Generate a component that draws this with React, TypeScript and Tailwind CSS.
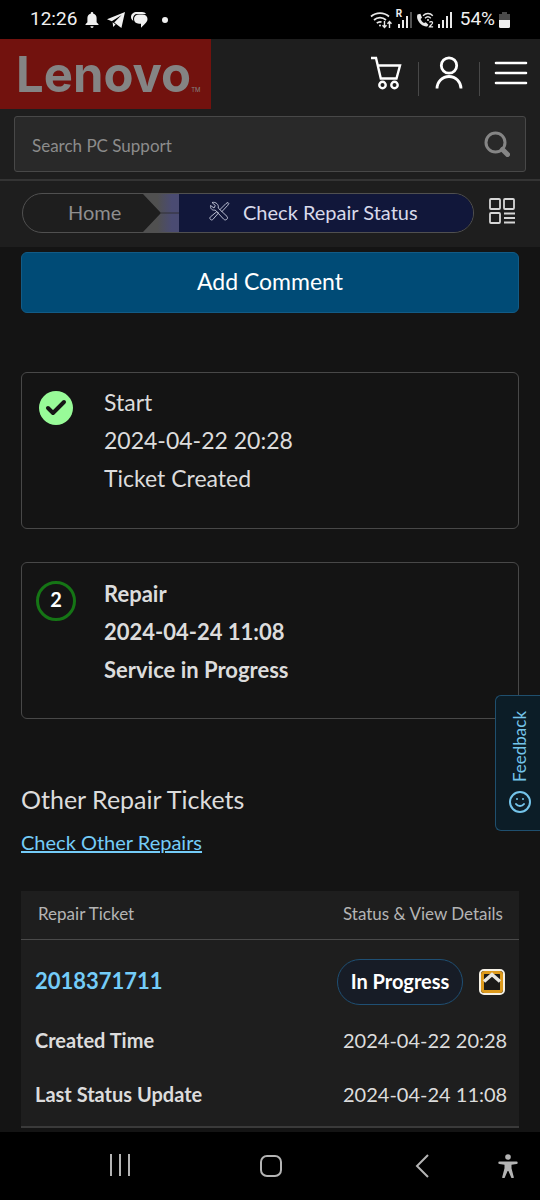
import { Check, Smile } from "lucide-react";

const steps = [
  { name: "Start", date: "2024-04-22 20:28", status: "Ticket Created", done: true },
  { name: "Repair", date: "2024-04-24 11:08", status: "Service in Progress", done: false },
];

const ticketDetails = [
  { label: "Created Time", value: "2024-04-22 20:28" },
  { label: "Last Status Update", value: "2024-04-24 11:08" },
];

const SignalBars = ({ weak = false }: { weak?: boolean }) => (
  <svg viewBox="0 0 14 16" className="h-4 w-3.5" fill="#e8e8e8" aria-hidden="true">
    <rect x="0" y="12" width="2" height="4" />
    <rect x="4" y="8" width="2" height="8" />
    <rect x="8" y="4" width="2" height="12" />
    <rect x="12" y="0" width="2" height="16" fillOpacity={weak ? 0.35 : 1} />
  </svg>
);

const StatusBar = () => (
  <div className="flex h-[39px] items-center justify-between bg-black pr-[30px] pl-[30px] font-['Roboto',sans-serif] text-[19px] text-[#f0f0f0]">
    <div className="flex items-center">
      <span>12:26</span>
      <svg viewBox="0 0 14 16" className="ml-2 h-4 w-3.5" fill="#f0f0f0" aria-hidden="true">
        <path d="M7 0a1.3 1.3 0 0 1 1.3 1.3v.4A4.5 4.5 0 0 1 11.6 6v4.2l1.9 2v.9H.5v-.9l1.9-2V6a4.5 4.500 0 0 1 3.300-4.300v-.4A1.300 1.300 0 0 1 7 0zM5.400 14.300h3.200a1.600 1.600 0 0 1-3.200 0z" />
      </svg>
      <svg viewBox="0 0 18 16" className="ml-2 h-4 w-[18px]" fill="#f0f0f0" aria-hidden="true">
        <path d="M18 0 0 7.300l4.800 1.900L14.600 3 7.200 10.600 14.400 16z" />
        <path d="m5.600 10.200.6 4.800 2.400-2.600z" />
      </svg>
      <svg viewBox="0 0 17 16" className="ml-1.5 h-4 w-[17px]" aria-hidden="true">
        <path d="M6 0h5c2 0 3.500.8 4 2H6C3.500 2 2 4 2 7c0 1 .2 1.500.5 2C1 8.200 0 6.800 0 5c0-3 2.500-5 6-5z" fill="#f0f0f0" />
        <path d="M8 2.500h3.500c3 0 5 1.900 5 4.600 0 2.200-1.300 3.600-3 5.200L10 15.700v-3.900H8c-3 0-5-1.900-5-4.700s2-4.600 5-4.600z" fill="#f0f0f0" />
      </svg>
      <span className="ml-3.5 size-1.5 rounded-full bg-[#f0f0f0]" />
    </div>
    <div className="flex items-center">
      <svg viewBox="0 0 22 18" className="h-[18px] w-[22px]" fill="none" stroke="#e8e8e8" strokeWidth="1.700" aria-hidden="true">
        <path d="M1 5.500a13.500 13.500 0 0 1 18 0M4 9a9 9 0 0 1 12 0M6.800 12.200a5 5 0 0 1 4.700-1.100" />
        <circle cx="10" cy="14.500" r="1" fill="#e8e8e8" stroke="none" />
        <path d="M14.500 10v6M12.500 14.300l2 2.200 2-2.200M19.500 17v-6M17.500 12.700l2-2.200 2 2.200" strokeWidth="1.400" />
      </svg>
      <span className="relative ml-1 flex h-4 w-4 justify-end">
        <span className="absolute -top-1 left-0 text-[10px] leading-3 font-bold">R</span>
        <SignalBars weak />
      </span>
      <svg viewBox="0 0 18 16" className="ml-1 h-4 w-[18px]" fill="none" stroke="#e8e8e8" aria-hidden="true">
        <path d="M1.500 2.500C.2 5.500 2 9.500 5 12.300c2 1.700 4.700 2.700 6.400 2l1-1.500-2.600-2.500-1.800.8C6.400 10.200 5 8.400 4.600 7l1.400-1.200L4.400 1.700z" fill="#e8e8e8" stroke="none" />
        <path d="M7 3.700c3-3 7-3 9.800 0M9 6.200c1.800-1.800 4-1.800 5.800 0" strokeWidth="1.400" />
        <path d="M13.500 10.500c.5-1.300 3.300-1.200 3 .5-.2 1.300-2 2.200-3 3.800h3.600" strokeWidth="1.300" />
        <circle cx="12" cy="8" r="1" fill="#e8e8e8" stroke="none" />
      </svg>
      <span className="ml-1">
        <SignalBars />
      </span>
      <span className="ml-2">54%</span>
      <svg viewBox="0 0 11 16" className="ml-1 h-4 w-[11px]" aria-hidden="true">
        <path d="M3 0h5v2h3v6H0V2h3z" fill="#4a4a4a" />
        <path d="M0 8h11v6.500a1.500 1.500 0 0 1-1.500 1.500h-8A1.500 1.500 0 0 1 0 14.500z" fill="#f0f0f0" />
      </svg>
    </div>
  </div>
);

const Header = () => (
  <header className="bg-[#1e1e1e]">
    <div className="flex h-[70px] items-center justify-between">
      <a href="#" className="flex h-full w-[211px] items-center bg-[#72120e] pl-4 font-['Inter',sans-serif] text-[49px] leading-none font-bold text-[#848484]">
        Lenovo
        <span className="mt-8 text-[6px] font-normal">TM</span>
      </a>
      <nav className="flex items-center pr-3 pb-0.5">
        <button type="button" aria-label="Cart" className="mr-4">
          <svg viewBox="0 0 32 34" className="h-[34px] w-8" fill="none" stroke="#fff" strokeWidth="2.400" aria-hidden="true">
            <path d="M1 2h5l4.800 20.500h15.700L30 9.500H8" />
            <circle cx="12.500" cy="29" r="3.200" />
            <circle cx="24.500" cy="29" r="3.200" />
          </svg>
        </button>
        <span className="mt-3 h-[34px] w-px bg-[#484848]" />
        <button type="button" aria-label="Account" className="mx-4">
          <svg viewBox="0 0 28 34" className="h-[34px] w-7" fill="none" stroke="#fff" strokeWidth="2.800" aria-hidden="true">
            <circle cx="14" cy="9.500" r="7.700" />
            <path d="M2 32.500a12 12 0 0 1 24 0" />
          </svg>
        </button>
        <span className="mt-3 h-[34px] w-px bg-[#484848]" />
        <button type="button" aria-label="Menu" className="ml-3.5">
          <svg viewBox="0 0 34 24" className="h-6 w-[34px]" stroke="#fff" strokeWidth="2.600" strokeLinecap="round" aria-hidden="true">
            <path d="M2 2h30M2 12h30M2 22h30" />
          </svg>
        </button>
      </nav>
    </div>

    {/* Search */}
    <div className="border-b-2 border-[#343434] px-3.5 pt-[7px] pb-[7px]">
      <form className="flex h-14 items-center rounded-[3px] border border-[#484848] bg-[#292929] pr-[15px] pl-[17px]">
        <input
          type="text"
          aria-label="Search PC Support"
          placeholder="Search PC Support"
          className="min-w-0 flex-1 bg-transparent pt-1 text-[17px] text-[#b0b0b0] outline-none placeholder:text-[#8c8c8c]"
        />
        <button type="button" aria-label="Search">
          <svg viewBox="0 0 26 26" className="size-[26px]" fill="none" stroke="#858585" aria-hidden="true">
            <circle cx="11.500" cy="11.500" r="9.500" strokeWidth="3" />
            <path d="m18.500 18.500 5 5" strokeWidth="5" strokeLinecap="round" />
          </svg>
        </button>
      </form>
    </div>

    {/* Breadcrumb */}
    <div className="flex h-[66px] items-center pr-6 pb-0.5 pl-[22px]">
      <nav className="flex h-10 flex-1 overflow-hidden rounded-full border border-[#505050]">
        <a href="#" className="flex w-[120px] items-center pb-0.5 pl-[45px] text-xl text-[#8f8f8f]">Home</a>
        <svg viewBox="0 0 36 38" preserveAspectRatio="none" className="h-full w-9 shrink-0" aria-hidden="true">
          <defs>
            <linearGradient id="crumb-arrow">
              <stop offset="0.4" stopColor="#505050" />
              <stop offset="0.8" stopColor="#4a4b72" />
            </linearGradient>
          </defs>
          <path d="M0 0h36v38H0l18-19z" fill="url(#crumb-arrow)" />
          <path d="M18 19h18" stroke="#303036" />
        </svg>
        <span className="flex flex-1 items-center bg-[#11173a] pb-0.5 pl-7 text-xl text-[#d8daea]">
          <svg viewBox="0 0 24 24" className="mr-3 size-6" fill="none" stroke="#b9bdd0" strokeWidth="1" strokeLinejoin="round" aria-hidden="true">
            <path d="M5 2.500 8.300 5.500 7 8 3.500 5.500c-.4 3.200 2 5.300 4.700 4.500l8.500 9.200c2 2 5-.6 3.300-2.800L11.200 8c.9-3.200-2.200-6.500-6.200-5.500z" />
            <path d="m12.500 10 6.500-6.500 2-1 .8.800-1 2L14.500 12" />
            <path d="m11.500 13-5.700 6.500c-1.500 1.500-4-.8-2.500-2.500L10 11.500z" />
          </svg>
          Check Repair Status
        </span>
      </nav>
      <button type="button" aria-label="All topics" className="ml-3.5 pb-1">
        <svg viewBox="0 0 28 28" className="size-7" fill="none" stroke="#d6d6d6" strokeWidth="1.800" aria-hidden="true">
          <rect x="2" y="2" width="10" height="10" rx="1" />
          <rect x="16" y="2" width="10" height="10" rx="1" />
          <rect x="2" y="16" width="10" height="10" rx="1" />
          <path d="M16 16.500h11M16 21h11M16 25.500h11" />
        </svg>
      </button>
    </div>
  </header>
);

const Steps = () => (
  <ol className="mt-[59px] flex flex-col gap-[33px]">
    {steps.map((step, index) => (
      <li key={step.name} className="flex h-[157px] rounded-md border border-[#484848] pt-2.5 leading-[38px] text-[#dcdcdc]">
        <div className="flex w-[82px] shrink-0 pt-2 pl-3.5">
          {step.done ? (
            <span className="mx-[3px] flex size-[34px] items-center justify-center rounded-full bg-[#98fb98] text-[#151515]">
              <Check size={24} strokeWidth={4} />
            </span>
          ) : (
            <span className="flex size-10 items-center justify-center rounded-full border-3 border-[#157515] pb-1 text-xl font-bold text-white">
              {index + 1}
            </span>
          )}
        </div>
        <div className={step.done ? "text-[23px]" : "pt-0.5 text-[22px] font-bold"}>
          <p>{step.name}</p>
          <p>{step.date}</p>
          <p>{step.status}</p>
        </div>
      </li>
    ))}
  </ol>
);

const TicketTable = () => (
  <table className="mt-[35px] w-full border-b-2 border-[#3a3a3a] bg-[#1e1e1e] text-left text-xl text-[#dcdcdc]">
    <thead>
      <tr className="h-12 border-b border-[#4a4a4a] text-[17px] text-[#b4b4b4]">
        <th className="pb-0.5 pl-[17px] font-normal">Repair Ticket</th>
        <th className="w-[182px] pb-0.5 pl-1.5 font-normal">Status &amp; View Details</th>
      </tr>
    </thead>
    <tbody>
      <tr className="h-[74px]">
        <th className="pt-2.5 pl-3.5 text-[22px]">
          <a href="#" className="text-[#74ccf8]">2018371711</a>
        </th>
        <td className="pt-3.5">
          <div className="flex items-center justify-between pr-3.5 pb-0.5">
            <span className="flex h-[46px] w-[126px] items-center justify-center rounded-full border border-[#1f4f73] bg-[#171c26] pb-0.5 font-bold text-white">
              In Progress
            </span>
            <button type="button" aria-label="Hide details" className="rounded-[5px] border-2 border-[#f5f1e6]">
              <svg viewBox="0 0 22 22" className="size-[22px]" fill="none" aria-hidden="true">
                <rect x="1.500" y="1.500" width="19" height="19" rx="2" fill="#1c1a18" stroke="#dd9a1c" strokeWidth="3" />
                <path d="M3 10.500 11 3.500l8 7" stroke="#e8e6df" strokeWidth="3.500" />
              </svg>
            </button>
          </div>
        </td>
      </tr>
      {ticketDetails.map((detail) => (
        <tr key={detail.label} className="h-[54px]">
          <th className="pl-3.5">{detail.label}</th>
          <td className="pl-1.5">{detail.value}</td>
        </tr>
      ))}
      <tr className="h-1.5">
        <td colSpan={2} />
      </tr>
    </tbody>
  </table>
);

const BottomBar = () => (
  <nav className="flex h-[68px] items-center bg-black text-[#b4b4b4]">
    <div className="grid flex-1 grid-cols-3 pl-11">
      <button type="button" aria-label="Recent apps" className="flex justify-center">
        <svg viewBox="0 0 22 22" className="size-[22px]" stroke="currentColor" strokeWidth="2" aria-hidden="true">
          <path d="M2 0v22M11 0v22M20 0v22" />
        </svg>
      </button>
      <button type="button" aria-label="Home" className="flex justify-center">
        <svg viewBox="0 0 24 24" className="size-6" fill="none" stroke="currentColor" strokeWidth="2" aria-hidden="true">
          <rect x="2" y="2" width="20" height="20" rx="6" />
        </svg>
      </button>
      <button type="button" aria-label="Back" className="flex justify-center">
        <svg viewBox="0 0 14 24" className="h-6 w-3.5" fill="none" stroke="currentColor" strokeWidth="2" aria-hidden="true">
          <path d="M13 1 2 12l11 11" />
        </svg>
      </button>
    </div>
    <button type="button" aria-label="Accessibility" className="mr-[22px]">
      <svg viewBox="0 0 20 24" className="h-6 w-5" fill="currentColor" aria-hidden="true">
        <circle cx="10" cy="3" r="2.800" />
        <path d="M1.500 7.500h17a1.200 1.200 0 0 1 0 2.400l-5 .8v3.600l2.200 8.400a1.300 1.300 0 0 1-2.500.8L10.400 17h-.8l-2.800 6.500a1.300 1.300 0 0 1-2.500-.8l2.200-8.400v-3.600l-5-.8a1.200 1.200 0 0 1 0-2.400z" />
      </svg>
    </button>
  </nav>
);

const App = () => {
  return (
    <div className="flex min-h-screen flex-col bg-[#141414] font-['Lato',sans-serif]">
      <StatusBar />
      <Header />
      <main className="relative flex-1 px-[21px] pt-[5px]">
        <button type="button" className="h-[61px] w-full rounded-md border border-[#125b86] bg-[#004b76] pb-0.5 text-[23px] text-white">
          Add Comment
        </button>
        <Steps />
        <h2 className="mt-[62px] text-[25px] leading-9 text-[#dcdcdc]">Other Repair Tickets</h2>
        <a href="#" className="mt-[11px] inline-block text-xl leading-7 text-[#74ccf8] underline">Check Other Repairs</a>
        <TicketTable />

        {/* Feedback tab pinned over the right edge */}
        <button
          type="button"
          className="absolute top-[448px] right-0 flex h-[136px] w-[45px] rotate-180 items-center gap-2 rounded-r-md border border-l-0 border-[#1f4f6e] bg-[#0c1d27] pt-4 pr-1 text-[17px] text-[#74c4ea] [writing-mode:vertical-rl]"
        >
          <Smile size={24} strokeWidth={2} className="rotate-180" />
          Feedback
        </button>
      </main>
      <BottomBar />
    </div>
  );
};

export default App;
